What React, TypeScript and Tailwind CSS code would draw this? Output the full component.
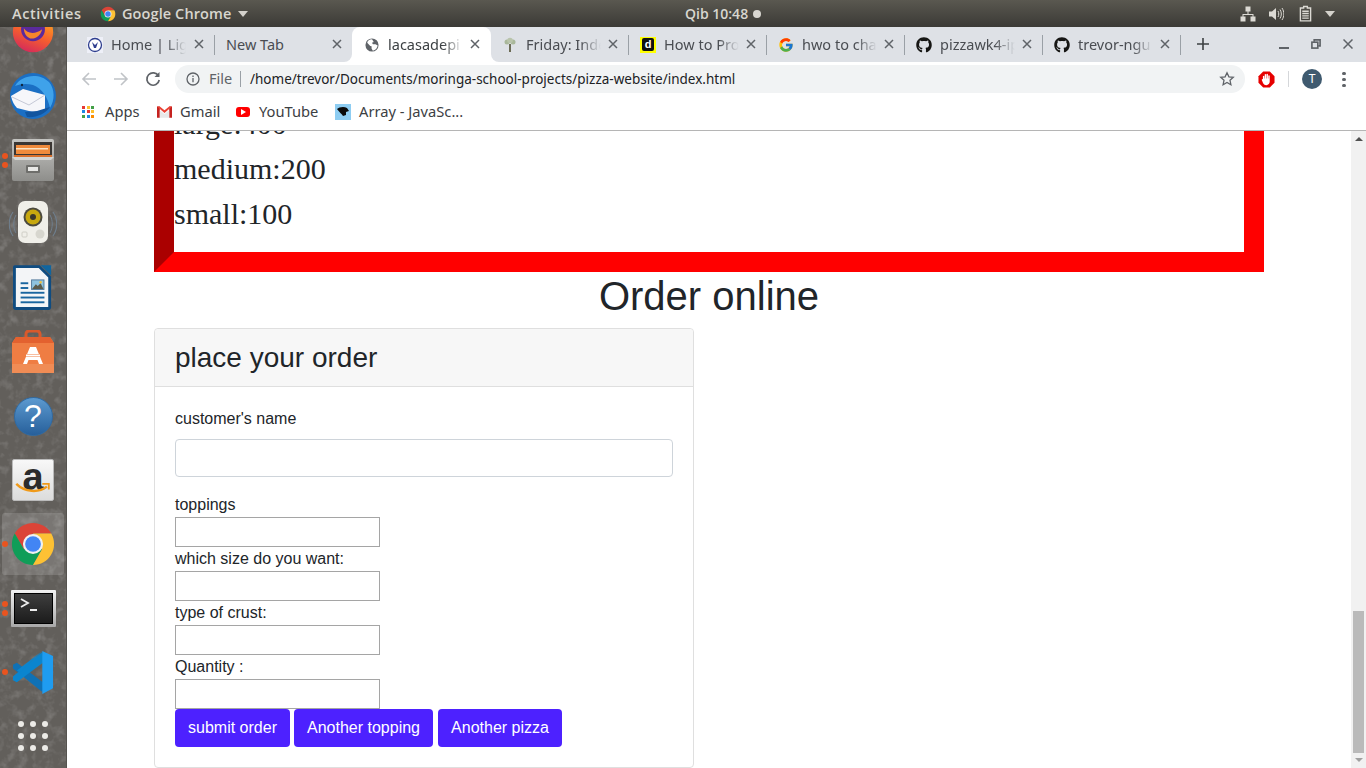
import React from "react";
import { FaGithub } from "react-icons/fa";
import { FcGoogle } from "react-icons/fc";

// ── Chrome logo (top bar and dock) ───────────────────────────────────────────

const ChromeLogo = ({ className }: { className: string }) => (
  <svg viewBox="0 0 48 48" className={className}>
    <path d="M43.05 13A22 22 0 0 0 4.95 13L14.5 29.5 24 13Z" fill="#db4437" />
    <path d="M4.95 13A22 22 0 0 0 24 46L33.5 29.5H14.5Z" fill="#0f9d58" />
    <path d="M43.05 13H24L33.5 29.5 24 46A22 22 0 0 0 43.05 13Z" fill="#fdc134" />
    <circle cx="24" cy="24" r="10.5" fill="#f1f1f1" />
    <circle cx="24" cy="24" r="8.2" fill="#4285f4" />
  </svg>
);

// ── Dock ─────────────────────────────────────────────────────────────────────

const FirefoxIcon = () => (
  <svg viewBox="0 0 48 48" className="w-[44px] h-[44px]">
    <defs>
      <linearGradient id="ff" x1="0.7" y1="0" x2="0.3" y2="1">
        <stop offset="0" stopColor="#ffb51f" />
        <stop offset="0.55" stopColor="#f6602d" />
        <stop offset="1" stopColor="#d4295c" />
      </linearGradient>
    </defs>
    <circle cx="24" cy="24" r="22" fill="url(#ff)" />
    <circle cx="24" cy="21" r="13" fill="#5a2a9c" />
    <path d="M14 20c4 6 12 7 20 1-2 8-8 11-13 10-4-1-7-6-7-11Z" fill="#f6862b" />
  </svg>
);

const ThunderbirdIcon = () => (
  <svg viewBox="0 0 48 48" className="w-[48px] h-[48px]">
    <circle cx="24" cy="24" r="23" fill="#1b6fc4" />
    <path d="M6 14C12 3 30 0 40 10c6 7 6 18 1 26-2-10-8-20-17-23-7-2-13-1-18 1Z" fill="#3fa2ea" />
    <circle cx="13" cy="13" r="1.2" fill="#10263f" />
    <path d="M2 24l12-7 22 6v15l-8 3L8 36C5 33 3 29 2 24Z" fill="#f6f6fa" />
    <path d="M3 25l17 8 16-10" fill="none" stroke="#c5c8d6" strokeWidth="1" />
    <path d="M18 45c9 1 18-3 23-10l-13 4-12 1Z" fill="#12559f" />
  </svg>
);

const FilesIcon = () => (
  <svg viewBox="0 0 44 44" className="w-[44px] h-[44px]">
    <defs>
      <linearGradient id="fc" x1="0" y1="0" x2="0" y2="1">
        <stop offset="0" stopColor="#c4c4c1" />
        <stop offset="1" stopColor="#8e8e8b" />
      </linearGradient>
    </defs>
    <rect x="1" y="1" width="42" height="42" rx="2" fill="url(#fc)" />
    <rect x="3" y="4" width="38" height="15" fill="#3a3633" />
    <rect x="5" y="7" width="34" height="9" fill="#ef8a3b" />
    <rect x="5" y="10" width="32" height="1.5" fill="#fbe3c4" />
    <path d="M3 17h38v2H3Z" fill="#d9702c" />
    <path d="M1 19h42l-3 3H4Z" fill="#d4d4d1" />
    <rect x="15" y="27" width="14" height="8" rx="1" fill="#6e6e6b" />
    <rect x="17" y="29" width="10" height="4" fill="#e8e8e6" />
  </svg>
);

const RhythmboxIcon = () => (
  <svg viewBox="0 0 48 48" className="w-[48px] h-[48px]">
    <path d="M4 12c-5 7-5 17 0 24M44 12c5 7 5 17 0 24" fill="none" stroke="#6f7f8e" strokeWidth="1.2" />
    <path d="M7 15c-3 5-3 13 0 18M41 15c3 5 3 13 0 18" fill="none" stroke="#6f7f8e" strokeWidth="1" />
    <rect x="9" y="1" width="30" height="42" rx="7" fill="#f0efe9" />
    <circle cx="24" cy="17" r="9.5" fill="#4c4a3e" />
    <circle cx="24" cy="17" r="7.500" fill="#c7a80f" />
    <circle cx="24" cy="17" r="3" fill="#3a382c" />
    <circle cx="31" cy="34" r="4.5" fill="#d7d6ce" />
    <rect x="13" y="32" width="5" height="5" rx="1" fill="none" stroke="#cfcec6" />
  </svg>
);

const WriterIcon = () => (
  <svg viewBox="0 0 42 48" className="w-[40px] h-[48px]">
    <path d="M2 0H28L40 12V44a3 3 0 0 1-3 3H3a3 3 0 0 1-3-3V2A2 2 0 0 1 2 0Z" fill="#0f4c81" />
    <path d="M3 3H27L37 13V44H3Z" fill="#f3f5f7" />
    <path d="M29 0H40V11Z" fill="#10659f" />
    <rect x="8" y="18" width="8" height="2" fill="#18659f" />
    <rect x="8" y="23" width="8" height="2" fill="#18659f" />
    <rect x="8" y="28" width="25" height="2" fill="#18659f" />
    <rect x="8" y="33" width="25" height="2" fill="#18659f" />
    <rect x="8" y="38" width="25" height="2" fill="#18659f" />
    <rect x="19" y="15" width="14" height="11" fill="#50789a" />
    <rect x="20" y="16" width="12" height="9" fill="#8fc4e0" />
    <path d="M20 25l4-5 2 2 3-3 3 6Z" fill="#5b5b4c" />
    <circle cx="29" cy="18" r="1.3" fill="#f0c040" />
  </svg>
);

const SoftwareIcon = () => (
  <svg viewBox="0 0 42 44" className="w-[42px] h-[44px]">
    <path d="M14 8V4a3 3 0 0 1 3-3h8a3 3 0 0 1 3 3v4" fill="none" stroke="#d9592b" strokeWidth="3" />
    <path d="M4 7H38L42 13V42H0V13Z" fill="#ef7d43" />
    <path d="M0 34H42V43H0Z" fill="#f08c55" />
    <path d="M4 7H38L42 13H0Z" fill="#e3612f" />
    <path d="M18 17h6l7 17h-4l-1.500-4h-9l-1.500 4h-4Z" fill="#fff" />
    <rect x="9" y="24" width="24" height="3" fill="#ef7d43" />
    <rect x="14" y="24.500" width="14" height="2" fill="#fff" />
  </svg>
);

const HelpIcon = () => (
  <div className="w-[39px] h-[39px] rounded-full bg-gradient-to-b from-[#5c9ad0] to-[#27609b] border border-[#2f6aa3] flex items-center justify-center font-['Liberation_Sans',sans-serif] text-[32px] leading-none text-white">
    ?
  </div>
);

const AmazonIcon = () => (
  <div className="w-[42px] h-[42px] rounded-[2px] bg-gradient-to-b from-[#f8f8f8] to-[#dcdcdc] border border-[#bbb] relative flex justify-center">
    <span className="font-['Liberation_Sans',sans-serif] font-bold text-[38px] leading-[34px] text-[#2b2b2b]">a</span>
    <svg viewBox="0 0 40 14" className="absolute left-[1px] bottom-[5px] w-[38px] h-[13px]">
      <path d="M2 2c9 9 24 10 33 3" fill="none" stroke="#f09a1a" strokeWidth="2.600" />
      <path d="M30 2h7v6" fill="none" stroke="#f09a1a" strokeWidth="2" />
    </svg>
  </div>
);

const TerminalIcon = () => (
  <div className="w-[45px] h-[37px] bg-gradient-to-b from-[#f2f2f2] to-[#a8a8a8] p-[3px] rounded-[1px]">
    <div className="w-full h-full bg-gradient-to-b from-[#3e3e3e] to-[#1c1c1c] border border-black relative">
      <svg viewBox="0 0 37 29" className="absolute inset-0 w-full h-full">
        <path d="M6 5l7 4-7 4" fill="none" stroke="#eee" strokeWidth="1.800" />
        <rect x="15" y="15" width="7" height="2" fill="#eee" />
      </svg>
    </div>
  </div>
);

const VsCodeIcon = () => (
  <svg viewBox="0 0 44 44" className="w-[43px] h-[43px]">
    <path d="M1 14l4-2 28 21-2 9L1 18Z" fill="#0f71b5" />
    <path d="M1 30l4 2L33 11 31 1 1 26Z" fill="#0a85cf" />
    <path d="M31 0l11 5v33l-11 6Z" fill="#1f9cf0" />
    <path d="M31 0L8 22l-3-2 26-20Z" fill="#0a85cf" />
  </svg>
);

const AppGrid = () => (
  <div className="grid grid-cols-3 gap-x-[6px] gap-y-[6px]">
    {[0, 1, 2, 3, 4, 5, 6, 7, 8].map((i) => (
      <div key={i} className="w-[6px] h-[6px] rounded-full bg-[#ecebe7]" />
    ))}
  </div>
);

const Dots = ({ count }: { count: number }) => (
  <div className="absolute left-[2px] top-0 bottom-0 flex flex-col justify-center gap-[3px]">
    {Array.from({ length: count }).map((_, i) => (
      <div key={i} className="w-[6px] h-[6px] rounded-full bg-[#e9541f]" />
    ))}
  </div>
);

const DockItem = ({
  dots = 0,
  active = false,
  children,
}: {
  dots?: number;
  active?: boolean;
  children: React.ReactNode;
}) => (
  <div className="relative h-[64px] w-full flex items-center justify-center shrink-0">
    {active && <div className="absolute left-[2px] top-[1px] w-[62px] h-[62px] rounded-[3px] bg-white/15" />}
    <div className="relative flex items-center justify-center">{children}</div>
    {dots > 0 && <Dots count={dots} />}
  </div>
);

const Dock = () => (
  <aside className="relative w-[67px] shrink-0 overflow-hidden bg-[#625f5b] border-r border-[#55534f]">
    {/* speckled wallpaper showing through */}
    <svg className="absolute inset-0 w-full h-full">
      <filter id="speck">
        <feTurbulence type="fractalNoise" baseFrequency="0.11" numOctaves="3" seed="7" />
        <feColorMatrix values="0 0 0 0 0.26  0 0 0 0 0.25  0 0 0 0 0.24  1.1 1.1 0 0 -1.05" />
      </filter>
      <rect width="100%" height="100%" filter="url(#speck)" />
    </svg>
    <div className="relative flex flex-col -mt-[27px]">
      <DockItem><FirefoxIcon /></DockItem>
      <DockItem><ThunderbirdIcon /></DockItem>
      <DockItem dots={2}><FilesIcon /></DockItem>
      <DockItem><RhythmboxIcon /></DockItem>
      <DockItem><WriterIcon /></DockItem>
      <DockItem><SoftwareIcon /></DockItem>
      <DockItem><HelpIcon /></DockItem>
      <DockItem><AmazonIcon /></DockItem>
      <DockItem dots={1} active><ChromeLogo className="w-[46px] h-[46px]" /></DockItem>
      <DockItem dots={2}><TerminalIcon /></DockItem>
      <DockItem dots={1}><VsCodeIcon /></DockItem>
      <DockItem><AppGrid /></DockItem>
    </div>
  </aside>
);

// ── Top bar ──────────────────────────────────────────────────────────────────

const TopBar = () => (
  <header className="h-[27px] shrink-0 relative flex items-center justify-between bg-gradient-to-b from-[#5a5850] to-[#3b3a36] text-[#d8d6cf] text-[14.500px] font-semibold font-['Open_Sans',sans-serif]">
    <div className="flex items-center">
      <span className="ml-[12px] w-[88px] tracking-[0.6px]">Activities</span>
      <ChromeLogo className="w-[16px] h-[16px]" />
      <span className="ml-[6px] w-[110px] whitespace-nowrap tracking-[0.1px]">Google Chrome</span>
      <svg viewBox="0 0 10 6" className="ml-[6px] w-[10px] h-[6px]"><path d="M0 0h10L5 6Z" fill="#d4d2cc" /></svg>
    </div>
    <div className="absolute left-[685px] top-0 h-full flex items-center gap-[4px] text-[14px]">
      <span className="w-[64px] whitespace-nowrap">Qib 10:48</span>
      <div className="w-[8px] h-[8px] rounded-full bg-[#d8d6d0]" />
    </div>
    <div className="flex items-center mr-[31px]">
      <svg viewBox="0 0 16 16" className="w-[16px] h-[16px]" fill="#dcdad4">
        <rect x="5.500" y="0.500" width="5" height="5" />
        <rect x="0.500" y="10.500" width="5" height="5" />
        <rect x="10.500" y="10.500" width="5" height="5" />
        <path d="M7.500 5h1v3H13.500v3h-1V9h-9v2h-1V8H7.500Z" />
      </svg>
      <svg viewBox="0 0 16 16" className="ml-[12px] w-[16px] h-[16px]" fill="none" stroke="#dcdad4">
        <path d="M1 5.500h3L8 2v12L4 10.500H1Z" fill="#dcdad4" stroke="none" />
        <path d="M10 5c1 2 1 4 0 6M12 3.500c1.800 3 1.800 6 0 9M14 2c2.500 4 2.500 8 0 12" />
      </svg>
      <svg viewBox="0 0 14 18" className="ml-[15px] w-[13px] h-[17px]" fill="none" stroke="#dcdad4" strokeWidth="1.500">
        <path d="M5 1.500h4V3h3.500v14h-11V3H5Z" />
        <path d="M3.500 6.500h7M3.500 9h7M3.500 11.500h7M3.500 14h7" />
      </svg>
      <svg viewBox="0 0 10 6" className="ml-[13px] w-[10px] h-[6px]"><path d="M0 0h10L5 6Z" fill="#d4d2cc" /></svg>
    </div>
  </header>
);

// ── Browser chrome ───────────────────────────────────────────────────────────

const Globe = () => (
  <svg viewBox="0 0 16 16" className="w-[14px] h-[14px]">
    <circle cx="8" cy="8" r="7.500" fill="#5f6368" />
    <path d="M8 1.500c-3 0-5 1.500-5.500 4L6 9l1.500.500V12l1.500 2.500c3-.500 5-3 5.500-6L12 7H9L8 5.500 10 4.500Z" fill="#fff" />
  </svg>
);

const LightFavicon = () => (
  <svg viewBox="0 0 16 16" className="w-[16px] h-[16px]">
    <rect width="16" height="16" fill="#eef0f8" />
    <circle cx="8" cy="8" r="6.500" fill="#fff" stroke="#2f3f8f" strokeWidth="1.300" />
    <path d="M5 5l2 6h2l2-6-3 3Z" fill="#2f3f8f" />
  </svg>
);

const TreeFavicon = () => (
  <svg viewBox="0 0 16 16" className="w-[16px] h-[16px]">
    <rect x="7" y="7" width="2" height="8" fill="#6b6b55" />
    <circle cx="5" cy="5" r="2.500" fill="#a9b79a" />
    <circle cx="11" cy="5" r="2.500" fill="#a9b79a" />
    <circle cx="8" cy="3.500" r="2.800" fill="#b9c4ab" />
  </svg>
);

const DevFavicon = () => (
  <div className="w-[16px] h-[16px] bg-[#ffff00] flex items-center justify-center">
    <div className="w-[12px] h-[13px] rounded-[2px] bg-[#111] flex items-center justify-center text-white text-[11px] leading-none font-bold font-['Liberation_Sans',sans-serif]">
      d
    </div>
  </div>
);

type TabData = { title: string; icon?: React.ReactNode; active?: boolean; first?: boolean };

const tabs: TabData[] = [
  { title: "Home | Ligh", icon: <LightFavicon />, first: true },
  { title: "New Tab" },
  { title: "lacasadepi", icon: <Globe />, active: true },
  { title: "Friday: Inde", icon: <TreeFavicon /> },
  { title: "How to Pro", icon: <DevFavicon /> },
  { title: "hwo to cha", icon: <FcGoogle className="w-[16px] h-[16px]" /> },
  { title: "pizzawk4-ip", icon: <FaGithub className="w-[16px] h-[16px] text-[#161614]" /> },
  { title: "trevor-ngu", icon: <FaGithub className="w-[16px] h-[16px] text-[#161614]" /> },
];

const CloseX = () => (
  <svg viewBox="0 0 10 10" className="w-[10px] h-[10px] shrink-0">
    <path d="M1 1l8 8M9 1l-8 8" stroke="#5f6368" strokeWidth="1.500" fill="none" />
  </svg>
);

const Tab = ({ tab }: { tab: TabData }) => (
  <div
    className={`relative h-[35px] shrink-0 flex items-center ${tab.first ? "pl-[11px]" : "pl-[12px]"} ${
      tab.active ? "bg-white rounded-t-[8px] w-[139px] -mr-[1px] z-10" : "w-[138px]"
    }`}
  >
    {/* concave feet of the active tab */}
    {tab.active && (
      <>
        <div className="absolute -left-[8px] bottom-0 w-[8px] h-[8px] bg-white">
          <div className="w-full h-full bg-[#dee1e6] rounded-br-[8px]" />
        </div>
        <div className="absolute -right-[8px] bottom-0 w-[8px] h-[8px] bg-white">
          <div className="w-full h-full bg-[#dee1e6] rounded-bl-[8px]" />
        </div>
      </>
    )}
    {tab.icon && <div className="w-[16px] h-[16px] flex items-center justify-center mr-[8px] shrink-0">{tab.icon}</div>}
    <div
      className={`whitespace-nowrap text-[14.500px] ${tab.icon ? "w-[78px]" : "w-[100px]"} ${
        tab.active ? "text-[#3c4043]" : "text-[#4a4d52]"
      } ${
        tab.icon
          ? "[mask-image:linear-gradient(to_right,black_70%,transparent_96%)]"
          : ""
      }`}
    >
      {tab.title}
    </div>
    <div className="absolute left-[118px] top-[12px]">
      <CloseX />
    </div>
    {!tab.active && <div className="absolute -right-[1px] top-[8px] h-[20px] w-px bg-[#9aa0a6]" />}
  </div>
);

const TabStrip = () => (
  <div className="h-[35px] shrink-0 bg-[#dee1e6] flex items-end pl-[9px] relative">
    {tabs.map((t) => (
      <Tab key={t.title} tab={t} />
    ))}
    <svg viewBox="0 0 12 12" className="ml-[17px] mb-[12px] w-[12px] h-[12px]">
      <path d="M6 0v12M0 6h12" stroke="#3c4043" strokeWidth="1.600" />
    </svg>
    <div className="ml-auto flex items-end mr-[13px] mb-[13px] gap-[22px]">
      <div className="w-[10px] h-[10px] flex items-end"><div className="w-full h-[2px] bg-[#5f6368]" /></div>
      <svg viewBox="0 0 11 11" className="w-[10px] h-[10px]" fill="none" stroke="#5f6368" strokeWidth="1.800">
        <path d="M3.500 3V1H10v6.500H8" />
        <rect x="1" y="3.500" width="6.500" height="6.500" />
      </svg>
      <svg viewBox="0 0 10 10" className="w-[10px] h-[10px]">
        <path d="M0.500 0.500l9 9M9.500 0.500l-9 9" stroke="#5f6368" strokeWidth="1.500" fill="none" />
      </svg>
    </div>
  </div>
);

const Toolbar = () => (
  <div className="h-[36px] shrink-0 bg-white flex items-center pb-[2px]">
    <svg viewBox="0 0 16 16" className="ml-[14px] w-[16px] h-[16px]" fill="none" stroke="#c0c3c7" strokeWidth="1.600">
      <path d="M15 8H2M8 2L2 8l6 6" />
    </svg>
    <svg viewBox="0 0 16 16" className="ml-[16px] w-[16px] h-[16px]" fill="none" stroke="#c0c3c7" strokeWidth="1.600">
      <path d="M1 8h13M8 2l6 6-6 6" />
    </svg>
    <svg viewBox="0 0 16 16" className="ml-[16px] w-[16px] h-[16px]" fill="none" stroke="#5f6368" strokeWidth="1.700">
      <path d="M13.500 5A6.200 6.200 0 1 0 14.200 9" />
      <path d="M14.500 1v5h-5Z" fill="#5f6368" stroke="none" />
    </svg>
    <div className="ml-[14px] w-[1070px] h-[28px] rounded-full bg-[#f1f3f4] flex items-center">
      <svg viewBox="0 0 14 14" className="ml-[11px] w-[14px] h-[14px]" fill="none" stroke="#5f6368" strokeWidth="1.300">
        <circle cx="7" cy="7" r="6" />
        <path d="M7 6v4.200M7 3.500v1.400" />
      </svg>
      <span className="ml-[9px] w-[24px] text-[14.500px] text-[#5f6368]">File</span>
      <div className="ml-[7px] w-px h-[16px] bg-[#9aa0a6]" />
      <span className="ml-[9px] text-[13.500px] text-[#202124]">/home/trevor/Documents/moringa-school-projects/pizza-website/index.html</span>
      <svg viewBox="0 0 16 16" className="ml-auto mr-[10px] w-[16px] h-[16px]" fill="none" stroke="#5f6368" strokeWidth="1.300">
        <path d="M8 1.800l1.900 4 4.400.500-3.300 3 .900 4.400L8 11.500l-3.900 2.200.900-4.400-3.300-3 4.400-.500Z" />
      </svg>
    </div>
    <svg viewBox="0 0 18 18" className="ml-[13px] w-[17px] h-[17px]">
      <path d="M5.500 0.500h7l5 5v7l-5 5h-7l-5-5v-7Z" fill="#e60000" />
      <path d="M5.200 8V5.500a.8.8 0 0 1 1.500 0V8h.4V3.800a.8.8 0 0 1 1.500 0V8h.4V3.500a.8.8 0 0 1 1.500 0V8h.4V5a.8.8 0 0 1 1.500 0v6.500c0 2-1.500 3.500-3.500 3.500-2.200 0-3-1-3.700-2.500L4 9.500a.8.8 0 0 1 1.200-.8Z" fill="#fff" />
    </svg>
    <div className="ml-[13px] w-px h-[16px] bg-[#d5d7da]" />
    <div className="ml-[13px] w-[20px] h-[20px] rounded-full bg-[#3f5a6f] flex items-center justify-center text-white text-[12px] font-['Roboto',sans-serif]">
      T
    </div>
    <div className="ml-[20px] flex flex-col gap-[3px]">
      <div className="w-[4px] h-[3px] rounded-full bg-[#5f6368]" />
      <div className="w-[4px] h-[3px] rounded-full bg-[#5f6368]" />
      <div className="w-[4px] h-[3px] rounded-full bg-[#5f6368]" />
    </div>
  </div>
);

const Bookmarks = () => (
  <div className="h-[33px] shrink-0 bg-white border-b border-[#b5b5b5] flex items-center text-[14.700px] text-[#3c4043] pb-[5px]">
    <div className="ml-[15px] w-[12px] grid grid-cols-3 gap-[1.500px]">
      {["#e53935", "#fbc02d", "#43a047", "#1e88e5", "#e53935", "#fbc02d", "#43a047", "#1e88e5", "#fb8c00"].map((c, i) => (
        <div key={i} className="w-[3px] h-[3px]" style={{ backgroundColor: c }} />
      ))}
    </div>
    <span className="ml-[11px] w-[35px]">Apps</span>
    <svg viewBox="0 0 16 12" className="ml-[17px] w-[15px] h-[12px]">
      <path d="M0 0h3v12H0ZM13 0h3v12h-3Z" fill="#c5221f" />
      <path d="M0 0h3l5 4 5-4h3L8 7Z" fill="#ea4335" />
      <path d="M3 4l5 4 5-4v8H3Z" fill="#e8e8e8" />
    </svg>
    <span className="ml-[8px] w-[39px]">Gmail</span>
    <div className="ml-[17px] w-[14px] h-[10px] rounded-[3px] bg-[#f00] flex items-center justify-center">
      <div className="border-l-[5px] border-l-white border-y-[3px] border-y-transparent" />
    </div>
    <span className="ml-[9px] w-[60px]">YouTube</span>
    <div className="ml-[16px] w-[16px] h-[16px] bg-[#8ecdf2] flex items-center justify-center">
      <svg viewBox="0 0 16 16" className="w-[16px] h-[16px]">
        <path d="M2 5c2-2 7-3 10-1l2 3-3 1 0 3-3 1c-1-2-4-4-6-7Z" fill="#0a0a0a" />
      </svg>
    </div>
    <span className="ml-[8px]">Array - JavaSc...</span>
  </div>
);

// ── Page inside the browser ──────────────────────────────────────────────────

const SizedField = ({ label }: { label: string }) => (
  <>
    <label className="block h-[24px] leading-[24px]">{label}</label>
    <input type="text" className="block w-[205px] h-[30px] bg-white border border-[#a5a5a5]" />
  </>
);

const OrderButton = ({ label, className }: { label: string; className: string }) => (
  <button className={`h-[38px] rounded-[4px] bg-[#4d21ff] text-white text-[16px] ${className}`}>{label}</button>
);

const Scrollbar = () => (
  <div className="w-[15px] shrink-0 bg-[#f1f1f1] flex flex-col items-center">
    <svg viewBox="0 0 8 4" className="mt-[6px] w-[8px] h-[4px]"><path d="M0 4h8L4 0Z" fill="#505050" /></svg>
    <div className="mt-[470px] w-[11px] h-[142px] bg-[#bababa]" />
    <svg viewBox="0 0 8 4" className="mt-[5px] w-[8px] h-[4px]"><path d="M0 0h8L4 4Z" fill="#a0a0a0" /></svg>
  </div>
);

const Page = () => (
  <div className="flex-1 min-h-0 flex bg-white overflow-hidden">
    <main className="flex-1 pl-[87px] text-[#212529] font-['Liberation_Sans',sans-serif] overflow-hidden">
      <div className="w-[1110px]">
        {/* price box, scrolled partly out of view */}
        <section className="-mt-[30px] h-[171px] border-[20px] border-t-0 border-[#f00] border-l-[#a00] font-['Liberation_Serif',serif] text-[30px] leading-[45px]">
          <p>large:400</p>
          <p>medium:200</p>
          <p>small:100</p>
        </section>

        <h1 className="h-[48px] mb-[8px] text-center text-[40px] leading-[48px] font-normal">Order online</h1>

        <div className="w-[540px] h-[440px] border border-[#dfdfdf] rounded-[4px]">
          <div className="h-[58px] px-[20px] bg-[#f7f7f7] border-b border-[#dfdfdf] rounded-t-[4px] text-[28px] leading-[57px]">
            place your order
          </div>
          <form className="p-[20px] text-[16px]">
            <label className="block h-[24px] leading-[24px] mb-[8px]">customer's name</label>
            <input type="text" className="block w-[498px] h-[38px] bg-white border border-[#ced4da] rounded-[4px] mb-[16px]" />
            <SizedField label="toppings" />
            <SizedField label="which size do you want:" />
            <SizedField label="type of crust:" />
            <SizedField label="Quantity :" />
            <div className="flex">
              <OrderButton label="submit order" className="w-[115px] mr-[4px]" />
              <OrderButton label="Another topping" className="w-[139px] mr-[5px]" />
              <OrderButton label="Another pizza" className="w-[124px]" />
            </div>
          </form>
        </div>
      </div>
    </main>
    <Scrollbar />
  </div>
);

// ── App ──────────────────────────────────────────────────────────────────────

export default function App() {
  return (
    <div className="w-[1366px] h-[768px] overflow-hidden flex flex-col font-['Noto_Sans',sans-serif]">
      <TopBar />
      <div className="flex-1 min-h-0 flex">
        <Dock />
        <div className="flex-1 min-w-0 flex flex-col">
          <TabStrip />
          <Toolbar />
          <Bookmarks />
          <Page />
        </div>
      </div>
    </div>
  );
}
